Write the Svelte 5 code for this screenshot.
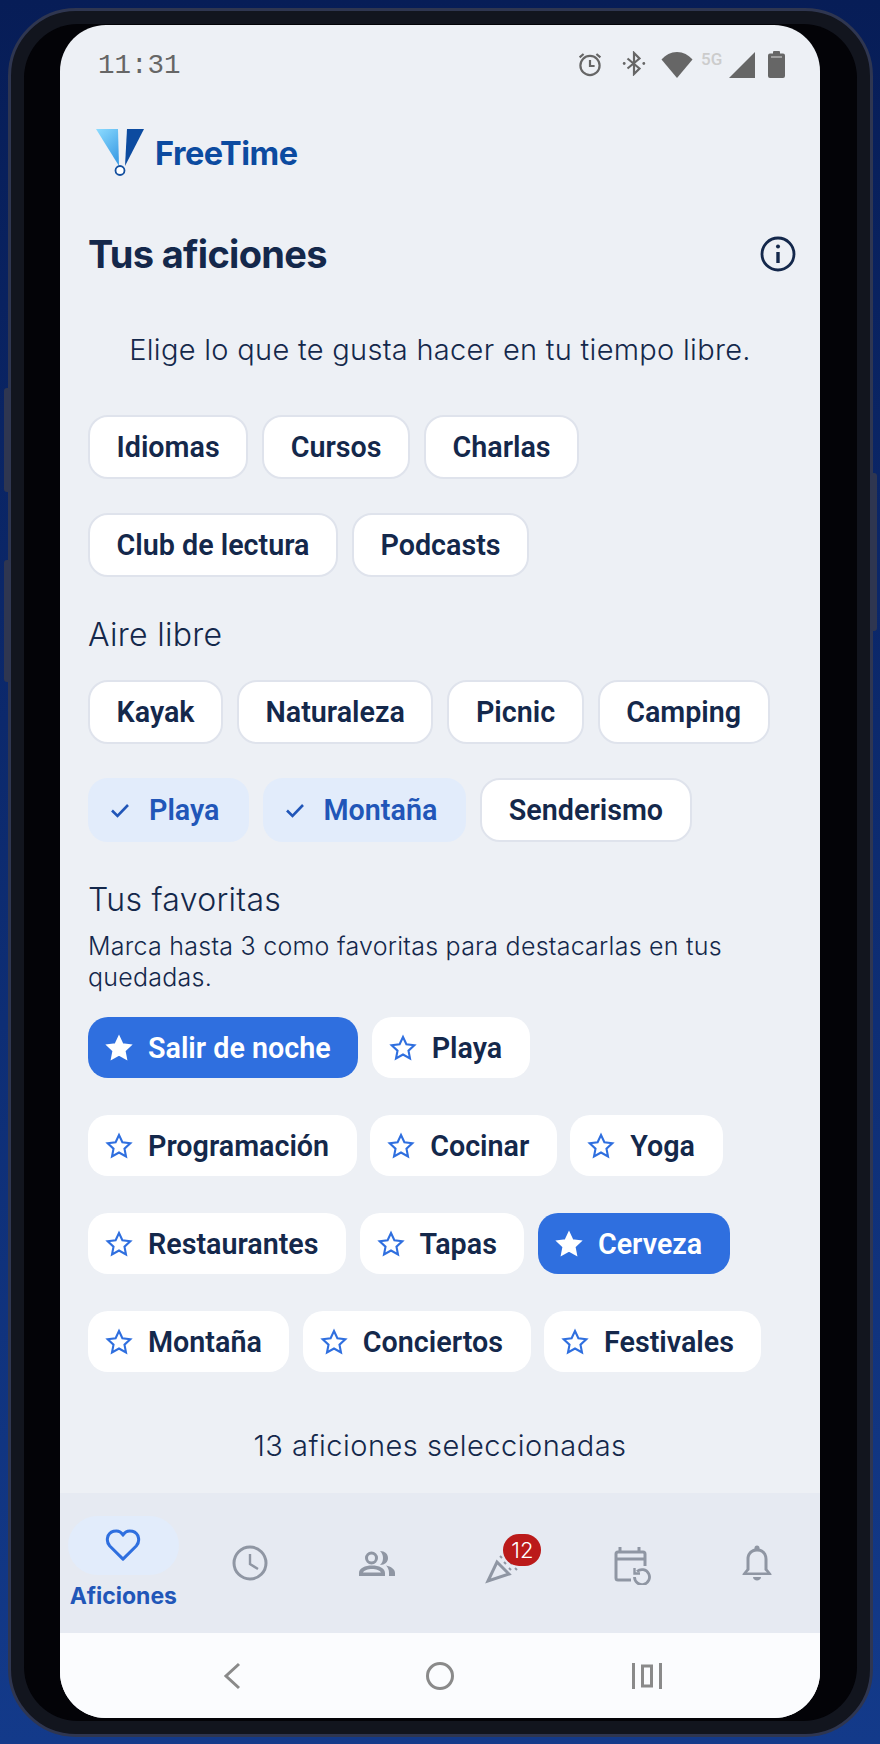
<script lang="ts">
	const studyRows = [['Idiomas', 'Cursos', 'Charlas'], ['Club de lectura', 'Podcasts']];
	const outdoorRows = [
		[{ label: 'Kayak' }, { label: 'Naturaleza' }, { label: 'Picnic' }, { label: 'Camping' }],
		[{ label: 'Playa', on: true }, { label: 'Montaña', on: true }, { label: 'Senderismo' }]
	];
	const favouriteRows = [
		[{ label: 'Salir de noche', on: true }, { label: 'Playa' }],
		[{ label: 'Programación' }, { label: 'Cocinar' }, { label: 'Yoga' }],
		[{ label: 'Restaurantes' }, { label: 'Tapas' }, { label: 'Cerveza', on: true }],
		[{ label: 'Montaña' }, { label: 'Conciertos' }, { label: 'Festivales' }]
	];
	const starPath = 'M12 2.6l2.9 6.2 6.8.8-5 4.7 1.3 6.7-6-3.4-6 3.4 1.3-6.7-5-4.7 6.8-.8z';
</script>

<div class="page">
	<span class="side-btn left one"></span>
	<span class="side-btn left two"></span>
	<span class="side-btn right"></span>
	<div class="phone">
		<div class="bezel">
			<div class="screen">
				<div class="status">
					<span class="time">11:31</span>
					<div class="status-icons">
						<svg width="26" height="26" viewBox="0 0 26 26" fill="none" stroke="#666" stroke-width="2.2">
							<circle cx="13" cy="14.5" r="9.6" />
							<path d="M13 9v6h4.6M2.6 6.4l4-3.4M23.4 6.4l-4-3.4" />
						</svg>
						<svg class="bt" width="24" height="25" viewBox="0 0 24 25" fill="none" stroke="#666" stroke-width="2.2">
							<path d="M5.5 7.5l12 10-5.500 5.500V2l5.500 5.500-12 10" />
							<circle cx="2.2" cy="12.5" r="1.4" fill="#666" stroke="none" />
							<circle cx="21.8" cy="12.5" r="1.4" fill="#666" stroke="none" />
						</svg>
						<svg class="wifi" width="32" height="27" viewBox="0 0 32 27">
							<path d="M16 27L.5 8.5C4.5 4 9.8 1 16 1s11.500 3 15.500 7.500z" fill="#666" />
						</svg>
						<span class="five-g">5G</span>
						<svg class="signal" width="26" height="26" viewBox="0 0 26 26">
							<path d="M26 0v26H0z" fill="#666" />
						</svg>
						<svg class="battery" width="17" height="27" viewBox="0 0 17 27">
							<path d="M5 2.500V1a1 1 0 0 1 1-1h5a1 1 0 0 1 1 1v1.500h3a2 2 0 0 1 2 2V25a2 2 0 0 1-2 2H2a2 2 0 0 1-2-2V4.500a2 2 0 0 1 2-2z" fill="#666" />
							<path d="M3 6h11" stroke="#d8d8d8" stroke-width="1.2" />
						</svg>
					</div>
				</div>

				<div class="content">
					<div class="logo">
						<svg width="50" height="48" viewBox="0 0 50 48">
							<path d="M0 0h22l1 37z" fill="url(#logo-light)" />
							<path d="M29 37L31 0h17z" fill="#0c4ba0" />
							<circle cx="24" cy="41.500" r="4.500" fill="#fff" stroke="#14509f" stroke-width="1.800" />
							<defs>
								<linearGradient id="logo-light" x1="0" y1="0" x2="0.600" y2="1">
									<stop offset="0" stop-color="#8ddcff" />
									<stop offset="1" stop-color="#3f9fe6" />
								</linearGradient>
							</defs>
						</svg>
						<span>FreeTime</span>
					</div>

					<div class="title-row">
						<h1>Tus aficiones</h1>
						<svg width="36" height="36" viewBox="0 0 36 36" fill="none" stroke="#14284b">
							<circle cx="18" cy="18" r="16" stroke-width="2.800" />
							<path d="M18 16v11" stroke-width="3.400" />
							<circle cx="18" cy="10.500" r="2" fill="#14284b" stroke="none" />
						</svg>
					</div>

					<p class="intro">Elige lo que te gusta hacer en tu tiempo libre.</p>

					<div class="rows">
						{#each studyRows as row, r (r)}
							<div class="chip-row">
								{#each row as label (label)}
									<span class="chip outlined">{label}</span>
								{/each}
							</div>
						{/each}
					</div>

					<h2>Aire libre</h2>
					<div class="rows">
						{#each outdoorRows as row, r (r)}
							<div class="chip-row">
								{#each row as chip (chip.label)}
									<span class="chip outlined" class:selected={chip.on}>
										{#if chip.on}
											<svg width="20" height="16" viewBox="0 0 20 16" fill="none" stroke="#2156b8" stroke-width="2.600">
												<path d="M2 8.500l5.500 5.500L18 3" />
											</svg>
										{/if}
										{chip.label}
									</span>
								{/each}
							</div>
						{/each}
					</div>

					<h2 class="fav-title">Tus favoritas</h2>
					<p class="hint">Marca hasta 3 como favoritas para destacarlas en tus quedadas.</p>
					<div class="rows favs">
						{#each favouriteRows as row, r (r)}
							<div class="chip-row">
								{#each row as chip (chip.label)}
									<span class="chip fav" class:starred={chip.on}>
										<svg width="28" height="28" viewBox="0 0 24 24" fill={chip.on ? '#fff' : 'none'} stroke={chip.on ? '#fff' : '#2f6fdf'} stroke-width="1.800">
											<path d={starPath} />
										</svg>
										{chip.label}
									</span>
								{/each}
							</div>
						{/each}
					</div>

					<p class="count">13 aficiones seleccionadas</p>
				</div>

				<nav class="tabs">
					<div class="tab active">
						<span class="pill">
							<svg width="36" height="34" viewBox="0 0 38 36" fill="none" stroke="#2f6fdf" stroke-width="3.200">
								<path d="M19 33L5 19C.5 14 2 5.500 9 3.500c4-1 8 .500 10 4 2-3.500 6-5 10-4 7 2 8.500 10.500 4 15.500z" stroke-linejoin="round" />
							</svg>
						</span>
						<span class="tab-label">Aficiones</span>
					</div>
					<div class="tab">
						<svg width="36" height="36" viewBox="0 0 36 36" fill="none" stroke="#8f96a3" stroke-width="3">
							<circle cx="18" cy="18" r="16" />
							<path d="M18 9v10l8 5" stroke-width="2.400" />
						</svg>
					</div>
					<div class="tab">
						<svg width="36" height="25" viewBox="0 0 36 25" fill="#8f96a3">
							<path fill-rule="evenodd" d="M12.500.5a6.500 6.500 0 1 1 0 13 6.500 6.500 0 0 1 0-13zm0 3a3.500 3.500 0 1 0 0 7 3.500 3.500 0 0 0 0-7z" />
							<path fill-rule="evenodd" d="M0 25v-3c0-5 6-7.500 13-7.500s13 2.500 13 7.500v3zm4-3.500h18c-1-2-5-3.500-9-3.500s-8 1.500-9 3.500z" />
							<path d="M21 0c5 0 8 3 8 7s-3 7-8 7c2-2 3-4 3-7s-1-5-3-7zM27 14.500c5 1 9 3.500 9 7.500v3h-6v-3c0-3-1-5.500-3-7.500z" />
						</svg>
					</div>
					<div class="tab">
						<div class="party">
							<svg width="36" height="36" viewBox="0 0 36 36" fill="none" stroke="#8f96a3" stroke-width="3">
								<path d="M3 33l9-19 12 12z" />
								<path d="M15 8l2 2M21 8l2 2M19 14l2 2M25 14l2 2M24 20l2 2M30 20l2 2" stroke-width="2" />
							</svg>
							<span class="badge">12</span>
						</div>
					</div>
					<div class="tab">
						<svg class="calendar" width="38" height="38" viewBox="0 0 38 38" fill="none" stroke="#8f96a3" stroke-width="3">
							<path d="M17 33H4a2 2 0 0 1-2-2V7a2 2 0 0 1 2-2h25a2 2 0 0 1 2 2v12M2 12h29M6 0v6M25 0v6" />
							<path d="M23 24.500A7.500 7.500 0 1 1 20.500 30" stroke-width="2.800" />
							<path d="M20.500 21v5.500H26" stroke-width="2.400" />
						</svg>
					</div>
					<div class="tab">
						<svg width="30" height="36" viewBox="0 0 30 36" fill="#8f96a3">
							<path fill-rule="evenodd" d="M12.500 3a2.500 2.500 0 0 1 5 0v.500C23 5 25.500 9.500 25.500 14v10l4 5v1H.500v-1l4-5V14c0-4.500 2.500-9 8-10.500zM15 6.500c-5.500 0-7.500 4-7.500 7.500v11l-2.500 2.500h20L22.500 25V14c0-3.500-2-7.500-7.500-7.500z" />
							<path d="M11 32h8c0 2-2 3.500-4 3.500s-4-1.500-4-3.500z" />
						</svg>
					</div>
				</nav>

				<div class="sys-nav">
					<svg width="18" height="28" viewBox="0 0 18 28" fill="none" stroke="#8a8a8a" stroke-width="3">
						<path d="M16 2L3 14l13 12" />
					</svg>
					<svg class="home" width="30" height="30" viewBox="0 0 30 30" fill="none" stroke="#8a8a8a" stroke-width="3">
						<circle cx="15" cy="15" r="12.500" />
					</svg>
					<svg width="30" height="26" viewBox="0 0 30 26" fill="none" stroke="#8a8a8a" stroke-width="3">
						<path d="M1.500 0v26M28.500 0v26M10.500 3h9v20h-9z" />
					</svg>
				</div>
			</div>
		</div>
	</div>
</div>

<style>
	:global(body) {
		margin: 0;
	}

	.page {
		position: relative;
		box-sizing: border-box;
		width: 880px;
		height: 1744px;
		padding: 8px 7px 7px 8px;
		background: linear-gradient(180deg, #071d57 0%, #133a8a 100%);
		font-family: 'Inter', sans-serif;
	}

	.side-btn {
		position: absolute;
		z-index: 1;
		width: 7px;
		background: #2f3650;
		border-radius: 3px;
	}

	.side-btn.left {
		left: 4px;
	}

	.side-btn.one {
		top: 388px;
		height: 104px;
	}

	.side-btn.two {
		top: 560px;
		height: 122px;
	}

	.side-btn.right {
		right: 3px;
		top: 473px;
		height: 158px;
	}

	.phone {
		position: relative;
		box-sizing: border-box;
		height: 1729px;
		padding: 13px;
		background: #12151e;
		border: 3px solid #2f3650;
		border-radius: 68px;
	}

	.bezel {
		box-sizing: border-box;
		height: 100%;
		padding: 1px 37px 3px 36px;
		background: #030307;
		border-radius: 54px;
	}

	.screen {
		display: flex;
		flex-direction: column;
		height: 100%;
		overflow: hidden;
		background: #edf0f5;
		border-radius: 46px;
	}

	.status {
		display: flex;
		justify-content: space-between;
		height: 66px;
		padding: 26px 35px 0 38px;
		box-sizing: border-box;
		flex: none;
	}

	.time {
		font-family: 'Liberation Mono', monospace;
		font-size: 27.500px;
		line-height: 30px;
		color: #666;
	}

	.status-icons {
		display: flex;
		align-items: flex-start;
		height: 28px;
	}

	.status-icons .bt {
		margin-left: 19px;
	}

	.status-icons .wifi {
		margin-left: 15px;
	}

	.five-g {
		margin-left: 8px;
		font-family: 'Roboto', sans-serif;
		font-size: 17px;
		font-weight: 500;
		line-height: 17px;
		color: #ccc;
		width: 25px;
	}

	.status-icons .signal {
		margin-left: 3px;
		margin-top: 1px;
	}

	.status-icons .battery {
		margin-left: 13px;
	}

	.content {
		flex: 1;
		padding: 0 28px;
		min-height: 0;
	}

	.logo {
		display: flex;
		align-items: center;
		gap: 9px;
		height: 48px;
		margin-top: 38px;
		padding-left: 8px;
		font-size: 32.500px;
		font-weight: 700;
		letter-spacing: -0.5px;
		color: #0c4ba0;
	}

	.title-row {
		display: flex;
		justify-content: space-between;
		align-items: center;
		margin: 55px -4px 0 0;
		height: 44px;
	}

	h1 {
		margin: 0;
		font-size: 38px;
		font-weight: 700;
		letter-spacing: -0.7px;
		color: #14284b;
	}

	.intro {
		margin: 56px 0 47px;
		font-size: 29px;
		font-weight: 300;
		letter-spacing: 0.3px;
		line-height: 36px;
		text-align: center;
		color: #14284b;
	}

	.rows {
		display: flex;
		flex-direction: column;
		gap: 34px;
	}

	.rows.favs {
		gap: 37px;
	}

	.chip-row {
		display: flex;
		gap: 14px;
	}

	.chip {
		display: inline-flex;
		align-items: center;
		box-sizing: border-box;
		height: 64px;
		padding: 0 26.500px;
		background: #fff;
		border: 2px solid #dfe3ec;
		border-radius: 20px;
		font-family: 'Roboto', sans-serif;
		font-size: 28.700px;
		font-weight: 600;
		color: #14284b;
	}

	.chip.selected {
		gap: 19px;
		padding: 0 27px 0 20px;
		background: #e2ecfb;
		border-color: #e2ecfb;
		color: #2156b8;
	}

	h2 {
		margin: 39px 0 26px;
		font-size: 32px;
		font-weight: 300;
		letter-spacing: 0.3px;
		line-height: 38px;
		color: #14284b;
	}

	h2.fav-title {
		margin: 39px 0 12px;
	}

	.hint {
		margin: 0 0 24px;
		font-size: 25px;
		font-weight: 300;
		letter-spacing: 0.25px;
		line-height: 31px;
		color: #14284b;
	}

	.chip.fav {
		gap: 15px;
		height: 61px;
		padding: 0 27.500px 0 17px;
		border: none;
	}

	.favs .chip-row {
		gap: 13.500px;
	}

	.chip.fav.starred {
		background: #2f6fdf;
		color: #fff;
	}

	.count {
		margin: 56px 0 0;
		font-size: 29px;
		font-weight: 300;
		letter-spacing: 0.5px;
		line-height: 36px;
		text-align: center;
		color: #14284b;
	}

	.tabs {
		display: grid;
		grid-template-columns: repeat(6, 1fr);
		flex: none;
		height: 140px;
		background: #e6eaf2;
	}

	.tab {
		display: flex;
		flex-direction: column;
		align-items: center;
		justify-content: center;
	}

	.pill {
		display: flex;
		align-items: center;
		justify-content: center;
		width: 111px;
		height: 59px;
		background: #e2ecfb;
		border-radius: 30px;
	}

	.tab-label {
		margin-top: 6px;
		font-size: 23px;
		font-weight: 700;
		line-height: 30px;
		color: #2156b8;
	}

	.calendar {
		margin: 6px 0 0 6px;
	}

	.party {
		position: relative;
		display: flex;
		margin-top: 5px;
	}

	.badge {
		position: absolute;
		top: -14px;
		left: 18px;
		width: 38px;
		height: 32px;
		background: #bb1a1a;
		border-radius: 16px;
		font-size: 22px;
		font-weight: 300;
		line-height: 32px;
		text-align: center;
		color: #fff;
	}

	.sys-nav {
		display: flex;
		justify-content: space-between;
		align-items: center;
		flex: none;
		height: 85px;
		padding: 0 158px 0 163px;
		box-sizing: border-box;
		background: #fbfcfe;
	}

	.home {
		margin-left: 7px;
	}
</style>
